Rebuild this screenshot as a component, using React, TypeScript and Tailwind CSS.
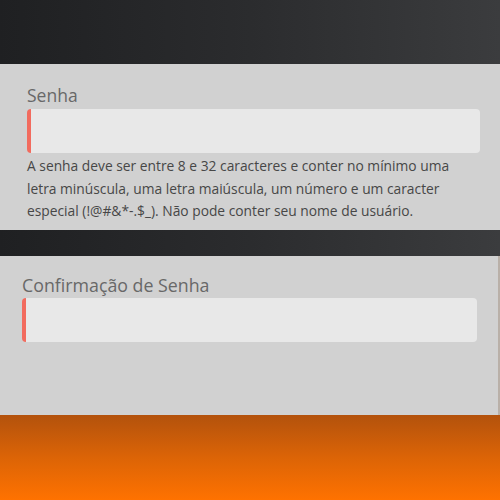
export default function App() {
  return (
    <div
      className="flex h-[500px] w-[500px] flex-col overflow-hidden"
      style={{ fontFamily: '"Open Sans", "Noto Sans", sans-serif' }}
    >
      <div className="h-[64px] bg-gradient-to-r from-[#1f2022] via-[#2b2c2e] to-[#3b3c3e]" />

      <div className="flex h-[166px] flex-col bg-[#d1d1d1] pl-[27px] pr-[20px] pt-[19px]">
        <label className="text-[17.5px] leading-[24px] text-[#686868]">Senha</label>
        <div className="mt-[2px] h-[44px] w-[453px] rounded-[4px] border-l-[4px] border-[#f26b5e] bg-[#e8e8e8]" />
        <p className="mt-[2px] whitespace-nowrap text-[13.8px] leading-[22.5px] text-[#474747]">
          A senha deve ser entre 8 e 32 caracteres e conter no mínimo uma
          <br />
          letra minúscula, uma letra maiúscula, um número e um caracter
          <br />
          especial (!@#&amp;*-.$_). Não pode conter seu nome de usuário.
        </p>
      </div>

      <div className="h-[26px] bg-gradient-to-r from-[#1f2022] via-[#2b2c2e] to-[#3b3c3e]" />

      <div className="flex h-[159px] flex-col border-r-[2px] border-[#b9b0a8] bg-[#d1d1d1] pl-[22px] pt-[17px]">
        <label className="text-[17.8px] leading-[24px] text-[#686868]">Confirmação de Senha</label>
        <div className="mt-[1px] h-[44px] w-[455px] rounded-[4px] border-l-[4px] border-[#f26b5e] bg-[#e8e8e8]" />
      </div>

      <div className="flex-1 bg-gradient-to-b from-[#b3520c] via-[#dc6406] to-[#ff7200]" />
    </div>
  )
}
